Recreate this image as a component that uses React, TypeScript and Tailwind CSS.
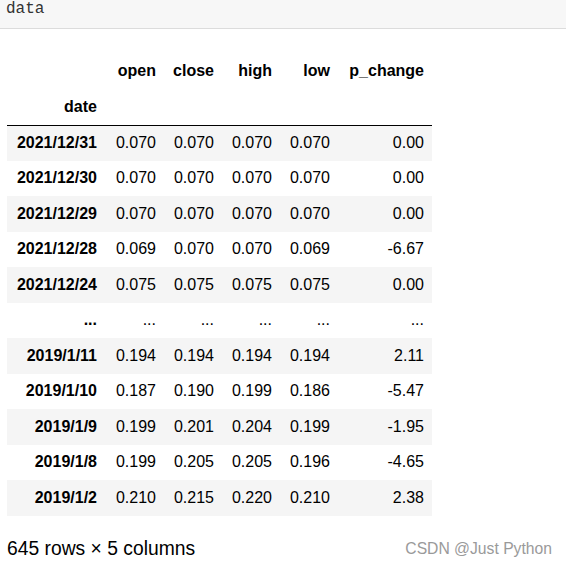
import React from "react";

const rows: [string, string, string, string, string, string][] = [
  ["2021/12/31", "0.070", "0.070", "0.070", "0.070", "0.00"],
  ["2021/12/30", "0.070", "0.070", "0.070", "0.070", "0.00"],
  ["2021/12/29", "0.070", "0.070", "0.070", "0.070", "0.00"],
  ["2021/12/28", "0.069", "0.070", "0.070", "0.069", "-6.67"],
  ["2021/12/24", "0.075", "0.075", "0.075", "0.075", "0.00"],
  ["...", "...", "...", "...", "...", "..."],
  ["2019/1/11", "0.194", "0.194", "0.194", "0.194", "2.11"],
  ["2019/1/10", "0.187", "0.190", "0.199", "0.186", "-5.47"],
  ["2019/1/9", "0.199", "0.201", "0.204", "0.199", "-1.95"],
  ["2019/1/8", "0.199", "0.205", "0.205", "0.196", "-4.65"],
  ["2019/1/2", "0.210", "0.215", "0.220", "0.210", "2.38"],
];

export default function App() {
  return (
    <div className="w-[566px] h-[569px] bg-white overflow-hidden relative text-black" style={{ fontFamily: '"Liberation Sans", Arial, sans-serif' }}>
      <div className="h-[29px] bg-[#f7f7f7] border-b border-[#dcdcdc] overflow-hidden">
        <div className="pl-[6px] mt-[-3px] text-[16px] leading-[24px] text-[#333]" style={{ fontFamily: '"Liberation Mono", monospace' }}>
          data
        </div>
      </div>
      <table className="ml-[7px] mt-[24px] border-collapse text-[16px]" style={{ tableLayout: "fixed", width: 425 }}>
        <colgroup>
          <col style={{ width: 99 }} />
          <col style={{ width: 58 }} />
          <col style={{ width: 58 }} />
          <col style={{ width: 58 }} />
          <col style={{ width: 58 }} />
          <col style={{ width: 94 }} />
        </colgroup>
        <thead>
          <tr className="h-[35.5px]">
            <th className="p-0"></th>
            {["open", "close", "high", "low", "p_change"].map((h) => (
              <th key={h} className="p-0 pr-[8px] text-right font-bold">{h}</th>
            ))}
          </tr>
          <tr className="h-[36.5px] border-b border-black">
            <th className="p-0 pr-[9px] text-right font-bold">date</th>
            <th className="p-0"></th>
            <th className="p-0"></th>
            <th className="p-0"></th>
            <th className="p-0"></th>
            <th className="p-0"></th>
          </tr>
        </thead>
        <tbody>
          {rows.map((r, i) => (
            <tr key={i} className={"h-[35.5px] " + (i % 2 === 0 ? "bg-[#f5f5f5]" : "bg-white")}>
              <th className="p-0 pr-[9px] text-right font-bold">{r[0]}</th>
              {r.slice(1).map((v, j) => (
                <td key={j} className="p-0 pr-[8px] text-right font-normal">{v}</td>
              ))}
            </tr>
          ))}
        </tbody>
      </table>
      <div className="flex items-center justify-between mt-[22px] pl-[7px] pr-[14px]">
        <span className="text-[19.3px] leading-[22px]" style={{ fontFamily: '"Liberation Sans", Arial, sans-serif' }}>645 rows × 5 columns</span>
        <span className="text-[15.7px] leading-[20px] text-[#9a9a9a]">CSDN @Just Python</span>
      </div>
    </div>
  );
}
